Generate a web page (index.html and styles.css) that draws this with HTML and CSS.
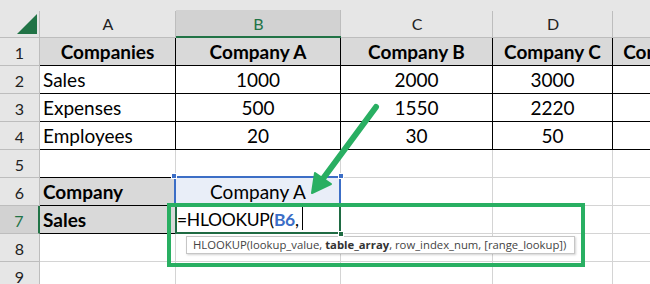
FILE: index.html
```html
<!DOCTYPE html>
<html lang="en">
  <head>
    <meta charset="UTF-8" />
    <meta name="viewport" content="width=device-width, initial-scale=1.0" />
    <title>HLOOKUP</title>
    <link rel="stylesheet" href="styles.css">
  </head>
  <body>
    <div class="sheet">
      <!-- column headers -->
      <div class="corner"><span class="tri"></span></div>
      <div class="ch">A</div>
      <div class="ch on">B</div>
      <div class="ch">C</div>
      <div class="ch">D</div>
      <div class="ch"></div>

      <div class="rh">1</div>
      <div class="c t b fill num">Companies</div>
      <div class="c t b fill num">Company A</div>
      <div class="c t b fill num">Company B</div>
      <div class="c t b fill num">Company C</div>
      <div class="c t b fill num">Company D</div>

      <div class="rh">2</div>
      <div class="c t">Sales</div>
      <div class="c t num">1000</div>
      <div class="c t num">2000</div>
      <div class="c t num">3000</div>
      <div class="c t num"></div>

      <div class="rh">3</div>
      <div class="c t">Expenses</div>
      <div class="c t num">500</div>
      <div class="c t num">1550</div>
      <div class="c t num">2220</div>
      <div class="c t num wide">12800</div>

      <div class="rh">4</div>
      <div class="c t">Employees</div>
      <div class="c t num">20</div>
      <div class="c t num">30</div>
      <div class="c t num">50</div>
      <div class="c t num"></div>

      <div class="rh">5</div>
      <div class="c t-bottom"></div>
      <div class="c"></div>
      <div class="c"></div>
      <div class="c"></div>
      <div class="c"></div>

      <div class="rh">6</div>
      <div class="c t b fill">Company</div>
      <div class="c sel num">
        Company A
        <span class="knob k-tl"></span>
        <span class="knob k-tr"></span>
      </div>
      <div class="c"></div>
      <div class="c"></div>
      <div class="c"></div>

      <div class="rh on">7</div>
      <div class="c t b fill">Sales</div>
      <div class="c edit">=HLOOKUP(<span class="ref">B6</span>,<span class="caret"></span><span class="knob k-br"></span></div>
      <div class="c"></div>
      <div class="c"></div>
      <div class="c"></div>

      <div class="rh">8</div>
      <div class="c"></div>
      <div class="c"></div>
      <div class="c"></div>
      <div class="c"></div>
      <div class="c"></div>

      <div class="rh">9</div>
      <div class="c"></div>
      <div class="c"></div>
      <div class="c"></div>
      <div class="c"></div>
      <div class="c"></div>
    </div>

    <!-- formula hint under the edited cell -->
    <div class="tip">HLOOKUP(lookup_value, <b>table_array</b>, row_index_num, [range_lookup])</div>

    <!-- annotation: box round the formula and an arrow to the lookup value -->
    <div class="callout"></div>
    <svg class="arrow" width="650" height="284" viewBox="0 0 650 284">
      <line x1="376" y1="107" x2="322" y2="180" stroke="#29af62" stroke-width="6" stroke-linecap="round" />
      <polygon points="312,193 315,173 331,184" fill="#29af62" stroke="#29af62" stroke-width="2" stroke-linejoin="round" />
    </svg>
  </body>
</html>
```

FILE: styles.css
```css
* {
  margin: 0;
  padding: 0;
  box-sizing: border-box;
}

body {
  font-family: "Lato", "Open Sans", sans-serif;
  background: #fff;
  width: 650px;
  height: 284px;
  overflow: hidden;
  position: relative;
  color: #000;
}

.sheet {
  display: grid;
  grid-template-columns: 40px 136px 165px 152px 120px 120px;
  grid-template-rows: 38px repeat(9, 28px);
}

/* headers */
.corner,
.ch {
  background: linear-gradient(#bdbdbd, #bdbdbd) right bottom / 1px 26px no-repeat,
    #e6e6e6;
  border-bottom: 1px solid #bdbdbd;
}

.corner {
  display: flex;
  align-items: flex-end;
  justify-content: flex-end;
  padding: 0 3px 3px 0;
}

.tri {
  width: 20px;
  height: 20px;
  background: #217346;
  clip-path: polygon(100% 0, 100% 100%, 0 100%);
}

.ch {
  font-size: 16px;
  color: #222;
  display: flex;
  align-items: flex-end;
  justify-content: center;
  padding-bottom: 4px;
}

.ch.on {
  background: linear-gradient(#bdbdbd, #bdbdbd) right bottom / 1px 26px no-repeat,
    linear-gradient(#d2d2d2, #d2d2d2) left bottom / 100% 26px no-repeat, #e6e6e6;
  border-bottom: 2px solid #217346;
  color: #217346;
  padding-bottom: 3px;
}

.rh {
  background: #e6e6e6;
  border-right: 1px solid #bdbdbd;
  border-bottom: 1px solid #bdbdbd;
  font-size: 16px;
  color: #222;
  text-align: center;
  line-height: 28px;
  padding-top: 1px;
}

.rh.on {
  background: #d2d2d2;
  color: #217346;
  border-right: 2px solid #217346;
}

/* cells */
.c {
  border-right: 1px solid #d4d4d4;
  border-bottom: 1px solid #d4d4d4;
  font-size: 19px;
  line-height: 27px;
  padding: 0 3px;
  white-space: nowrap;
}

.t {
  border-color: #000;
}

.t-bottom {
  border-bottom-color: #000;
}

.b {
  font-weight: bold;
}

.fill {
  background: #d9d9d9;
}

.num {
  text-align: center;
}

.wide {
  text-align: left;
  padding-left: 37px;
}

.sel {
  position: relative;
  background: #e9eef8;
}

.sel::after {
  content: "";
  position: absolute;
  left: -2px;
  top: -2px;
  right: -1px;
  bottom: -1px;
  border: 2px solid #3c6ec6;
}

.knob {
  position: absolute;
  width: 6px;
  height: 6px;
  background: #3c6ec6;
  border: 1px solid #fff;
  z-index: 2;
}

.k-tl {
  left: -5px;
  top: -5px;
}

.k-tr {
  right: -4px;
  top: -5px;
}

.edit {
  position: relative;
  background: #fff;
  padding-left: 1px;
  border-color: transparent;
  font-size: 17.5px;
  letter-spacing: -0.3px;
}

.edit::after {
  content: "";
  position: absolute;
  left: -1px;
  top: -1px;
  right: -1px;
  bottom: -1px;
  border: 2px solid #1f6b43;
  border-top: none;
}

.edit .knob {
  background: #1f6b43;
  right: -4px;
  bottom: -4px;
}

.ref {
  color: #3c6ec6;
  font-weight: bold;
}

.caret {
  display: inline-block;
  width: 1px;
  height: 23px;
  background: #000;
  margin-left: 3px;
  vertical-align: -4px;
}

/* hint box */
.tip {
  position: absolute;
  left: 186px;
  top: 236px;
  width: 389px;
  height: 18px;
  padding: 0 6px;
  background: #fff;
  border: 1px solid #c6c6c6;
  box-shadow: 1px 1px 2px rgba(0, 0, 0, 0.18);
  font-family: "Open Sans", sans-serif;
  font-size: 11.3px;
  line-height: 16px;
  color: #444;
  white-space: nowrap;
  overflow: hidden;
}

.tip b {
  color: #333;
}

/* annotation */
.callout {
  position: absolute;
  left: 167px;
  top: 203px;
  width: 418px;
  height: 64px;
  border: 4px solid #29af62;
}

.arrow {
  position: absolute;
  left: 0;
  top: 0;
  pointer-events: none;
}
```
